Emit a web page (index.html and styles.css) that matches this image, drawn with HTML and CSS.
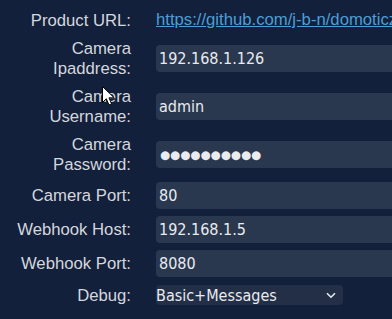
FILE: index.html
```html
<!DOCTYPE html>
<html>
<head>
<meta charset="utf-8">
<link rel="stylesheet" href="styles.css">
</head>
<body>
<div class="form">
  <div class="label single">Product URL:</div>
  <div class="value single"><a class="link" href="#">https://github.com/j-b-n/domoticz-Dahua</a></div>

  <div class="label double">Camera<br>Ipaddress:</div>
  <div class="value"><input class="field" type="text" value="192.168.1.126"></div>

  <div class="label double">Camera<br>Username:</div>
  <div class="value"><input class="field" type="text" value="admin"></div>

  <div class="label double">Camera<br>Password:</div>
  <div class="value"><input class="field secret" type="text" value="●●●●●●●●●●" aria-label="Camera Password"></div>

  <div class="label">Camera Port:</div>
  <div class="value"><input class="field" type="text" value="80"></div>

  <div class="label">Webhook Host:</div>
  <div class="value"><input class="field" type="text" value="192.168.1.5"></div>

  <div class="label">Webhook Port:</div>
  <div class="value"><input class="field" type="text" value="8080"></div>

  <div class="label single">Debug:</div>
  <div class="value single">
    <div class="select">
      <span>Basic+Messages</span>
      <svg class="chev" width="10" height="7" viewBox="0 0 10 7"><path d="M1 1.2 L5 5.2 L9 1.2" fill="none" stroke="#e6e9ee" stroke-width="1.6"/></svg>
    </div>
  </div>
</div>
<svg class="cursor" width="14" height="21" viewBox="0 0 14 21"><path d="M0.5 0.5 L0.5 16.5 L4.3 12.8 L7 19 L9.6 17.9 L7 11.8 L12.2 11.8 Z" fill="#ffffff" stroke="#000000" stroke-width="1"/></svg>
</body>
</html>
```
FILE: styles.css
```css
html, body {
  margin: 0;
  padding: 0;
  background: #13203b;
  overflow: hidden;
}
body {
  width: 392px;
  height: 319px;
  position: relative;
}
.form {
  display: grid;
  grid-template-columns: 131px 1fr;
  column-gap: 25px;
  row-gap: 7px;
  padding-top: 9px;
  align-items: center;
  width: 600px;
}
.label {
  font-family: "Liberation Sans", Arial, sans-serif;
  font-size: 16.7px;
  line-height: 19px;
  color: #d3d7de;
  text-align: right;
  white-space: nowrap;
}
.label.double {
  padding: 1px 0;
  line-height: 19.5px;
}
.single {
  min-height: 22px;
  display: flex;
  align-items: center;
}
.label.single {
  justify-content: flex-end;
}
.link {
  font-family: "Liberation Sans", Arial, sans-serif;
  font-size: 16.7px;
  color: #4b9fd6;
  text-decoration: underline;
  white-space: nowrap;
}
.field {
  display: block;
  box-sizing: border-box;
  width: 420px;
  height: 27px;
  margin: 0;
  border: none;
  outline: none;
  border-radius: 4px;
  background: #29384f;
  color: #e9ebef;
  padding: 0 3px;
  font-family: "DejaVu Sans Condensed", "DejaVu Sans", sans-serif;
  font-size: 16px;
}
.field.secret {
  font-family: "DejaVu Sans", sans-serif;
  font-size: 11.6px;
  padding-left: 4px;
}
.select {
  box-sizing: border-box;
  width: 187px;
  height: 20px;
  border-radius: 4px;
  background: #222f47;
  color: #e9ebef;
  font-family: "DejaVu Sans Condensed", "DejaVu Sans", sans-serif;
  font-size: 16px;
  display: flex;
  align-items: center;
  justify-content: space-between;
  padding: 0 7px 0 0;
}
.chev {
  display: block;
}
.cursor {
  position: absolute;
  left: 102px;
  top: 86px;
}
```
